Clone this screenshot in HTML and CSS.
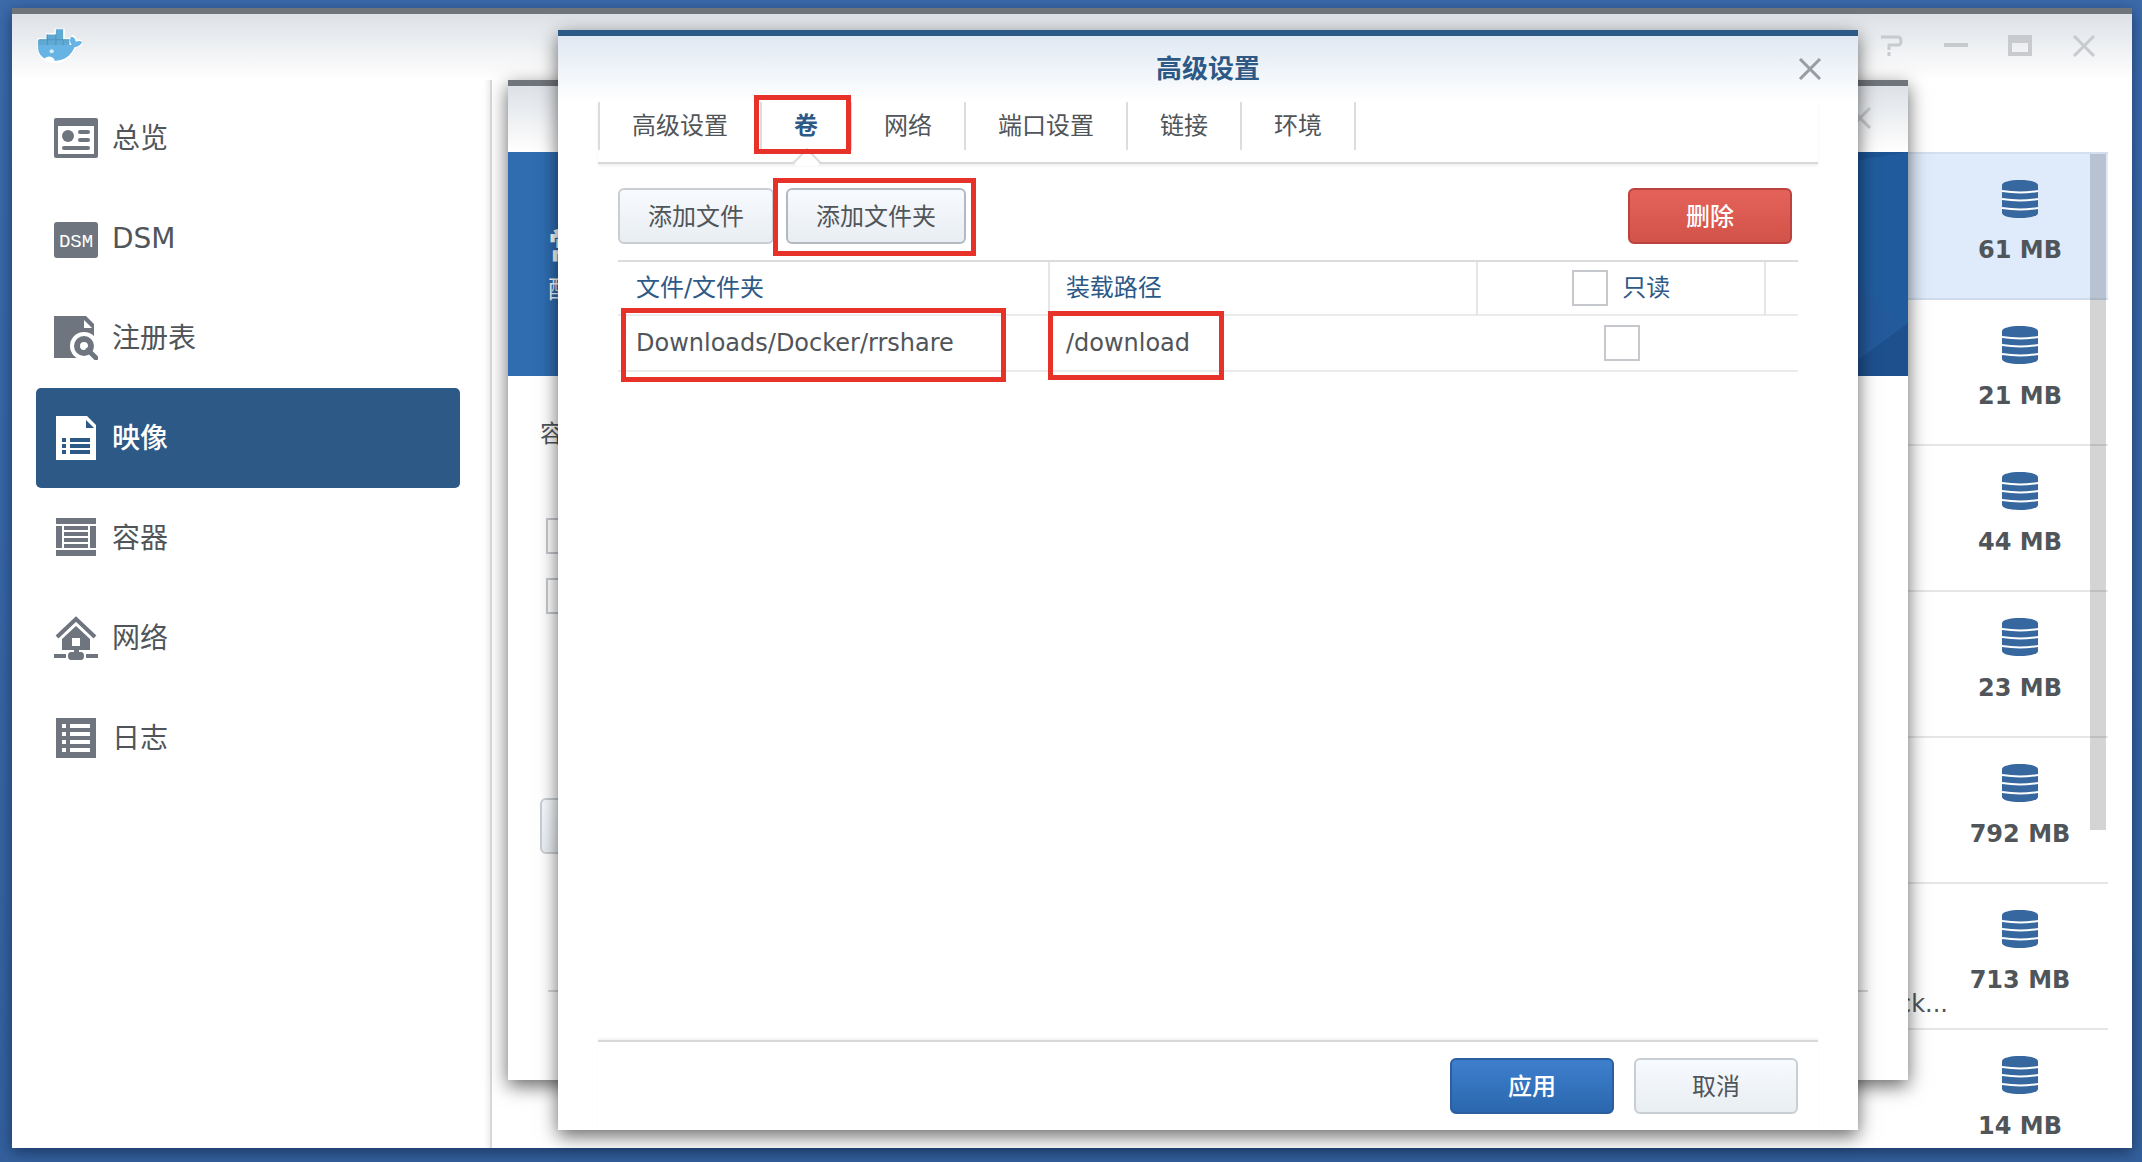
FILE: index.html
```html
<!DOCTYPE html>
<html lang="zh-CN">
<head>
    <meta charset="UTF-8">
    <meta name="viewport" content="width=device-width, initial-scale=1.0">
    <title>Docker</title>
    <link rel="stylesheet" href="styles.css">
</head>
<body>
    <svg width="0" height="0" class="defs">
        <symbol id="close" viewBox="0 0 24 22">
            <path d="M2 1L22 21M22 1L2 21" fill="none" stroke="currentColor" stroke-width="3"/>
        </symbol>
        <symbol id="disk" viewBox="0 0 36 38">
            <path d="M0 5C0 2 8 0 18 0s18 2 18 5v28c0 3-8 5-18 5S0 36 0 33z" fill="#36679f"/>
            <path d="M0 11q18 3 36 0M0 19q18 3 36 0M0 28q18 3 36 0" fill="none" stroke="#fff" stroke-width="2"/>
        </symbol>
    </svg>

    <div class="window main-window">
        <header class="titlebar">
            <svg class="logo" viewBox="0 0 44 34">
                <path d="M3 16V11h8V6h8V2h7v9h6v5h2c-1-3-1-6 1-8 2 1 3 3 3 5 2-1 4-1 6 0-1 3-4 4-7 4-4 10-10 15-19 15C9 32 2 27 3 16z" fill="#fff" stroke="#fff" stroke-width="3"/>
                <path d="M2 17V11h8V6h9V1h7v10h6v6z" fill="#5fa9d3"/>
                <path d="M2 16h32c-2-3-2-6 0-8 2 1 4 2 4 5 2-1 4-1 6 0-1 3-4 5-7 5-4 9-10 13-19 13C8 31 1 26 2 16z" fill="#67b3e4"/>
                <path d="M3 11h29M11 6v10M19 6v10M26 11v5" stroke="#4b97c2" fill="none"/>
                <path d="M8 29q5-4 9 0l1 2q-6 1-10-2z" fill="#fff"/>
                <circle cx="15" cy="22" r="2" fill="#d5edfa"/>
            </svg>
            <div class="controls">
                <button type="button" aria-label="帮助">
                    <svg width="24" height="22" viewBox="0 0 24 22"><path d="M1 2h17q3 0 3 4t-3 4H9v5M9 17v4" fill="none" stroke="currentColor" stroke-width="3"/></svg>
                </button>
                <button type="button" aria-label="最小化">
                    <svg width="24" height="22" viewBox="0 0 24 22"><path d="M0 10h24" stroke="currentColor" stroke-width="4"/></svg>
                </button>
                <button type="button" aria-label="最大化">
                    <svg width="24" height="22" viewBox="0 0 24 22"><path d="M2 1v18h20V1M0 2h24M2 6h20" fill="none" stroke="currentColor" stroke-width="4"/></svg>
                </button>
                <button type="button" aria-label="关闭">
                    <svg width="24" height="22"><use href="#close"/></svg>
                </button>
            </div>
        </header>
        <div class="main-body">
            <nav class="sidebar">
                <a href="#" class="nav-item">
                    <svg viewBox="0 0 44 44">
                        <rect y="2" width="44" height="40" rx="2"/>
                        <path d="M4 10h36v28H4z" fill="#fff"/>
                        <circle cx="14" cy="20" r="6"/>
                        <path d="M26 16h8M26 24h8M10 32h24" stroke="currentColor" stroke-width="4" stroke-linecap="round"/>
                    </svg>
                    <span>总览</span>
                </a>
                <a href="#" class="nav-item">
                    <svg viewBox="0 0 44 44">
                        <rect y="6" width="44" height="36" rx="3"/>
                        <text x="22" y="31" class="dsm">DSM</text>
                    </svg>
                    <span>DSM</span>
                </a>
                <a href="#" class="nav-item">
                    <svg viewBox="0 0 44 44">
                        <path d="M0 0h32l8 8v34H0z"/>
                        <path d="M30 4v8h8z" fill="#fff"/>
                        <circle cx="30" cy="30" r="14" fill="#fff"/>
                        <path d="M34 34l8 8" stroke="#fff" stroke-width="9"/>
                        <circle cx="30" cy="30" r="7" fill="#fff" stroke="currentColor" stroke-width="6"/>
                        <path d="M34 34l8 8" stroke="currentColor" stroke-width="5" stroke-linecap="round"/>
                    </svg>
                    <span>注册表</span>
                </a>
                <a href="#" class="nav-item active">
                    <svg viewBox="0 0 44 44">
                        <path d="M2 0h31l9 9v35H2z"/>
                        <path d="M32 4v8h8z" fill="#2d5986"/>
                        <path d="M8 24h4M16 24h20M8 30h4M16 30h20M8 36h4M16 36h20" stroke="#2d5986" stroke-width="4"/>
                    </svg>
                    <span>映像</span>
                </a>
                <a href="#" class="nav-item">
                    <svg viewBox="0 0 44 44">
                        <path d="M2 2h40v6H2zM2 10h6v22H2zM36 10h6v22h-6zM2 34h40v6H2zM10 10h24v4H10zM10 16h24v4H10zM10 22h24v4H10zM10 28h24v4H10z"/>
                    </svg>
                    <span>容器</span>
                </a>
                <a href="#" class="nav-item">
                    <svg viewBox="0 0 44 44">
                        <path d="M3 21L22 3l19 18" fill="none" stroke="currentColor" stroke-width="4"/>
                        <path d="M22 10l14 13v11H25v2h2q3 0 3 4t-3 4H17q-3 0-3-4t3-4h3v-2H8V23z"/>
                        <path d="M18 22h8v8h-8z" fill="#fff"/>
                        <path d="M0 38h12v4H0zM32 38h12v4H32z"/>
                    </svg>
                    <span>网络</span>
                </a>
                <a href="#" class="nav-item">
                    <svg viewBox="0 0 44 44">
                        <path d="M2 2h40v40H2z"/>
                        <path d="M8 10h4M16 10h20M8 18h4M16 18h20M8 26h4M16 26h20M8 34h4M16 34h20" stroke="#fff" stroke-width="4"/>
                    </svg>
                    <span>日志</span>
                </a>
            </nav>
            <div class="images">
                <div class="image-row selected">
                    <div class="size"><svg><use href="#disk"/></svg>61 MB</div>
                </div>
                <div class="image-row">
                    <div class="size"><svg><use href="#disk"/></svg>21 MB</div>
                </div>
                <div class="image-row">
                    <div class="size"><svg><use href="#disk"/></svg>44 MB</div>
                </div>
                <div class="image-row">
                    <div class="size"><svg><use href="#disk"/></svg>23 MB</div>
                </div>
                <div class="image-row">
                    <div class="size"><svg><use href="#disk"/></svg>792 MB</div>
                </div>
                <div class="image-row">
                    <span class="desc">ck...</span>
                    <div class="size"><svg><use href="#disk"/></svg>713 MB</div>
                </div>
                <div class="image-row">
                    <div class="size"><svg><use href="#disk"/></svg>14 MB</div>
                </div>
                <div class="scrollbar"></div>
            </div>
        </div>
    </div>

    <div class="window wizard">
        <header class="titlebar">
            <div class="controls">
                <button type="button" aria-label="关闭"><svg width="24" height="22"><use href="#close"/></svg></button>
            </div>
        </header>
        <div class="banner">
            <h2>常</h2>
            <p>配</p>
            <svg class="banner-art" viewBox="0 0 140 224">
                <path d="M0 0h140v224H0z" fill="#205c9d"/>
                <path d="M0 0h140L90 8z" fill="#1c5393"/>
                <path d="M90 133l47 40-47 35z" fill="#235a9c"/>
                <path d="M140 171v53H90v-16z" fill="#1e508e"/>
            </svg>
        </div>
        <div class="wizard-body">
            <p>容</p>
            <input type="checkbox" class="box" aria-label="资源限制">
            <input type="checkbox" class="box" aria-label="自动重启">
            <button type="button" class="btn" aria-label="高级设置"></button>
        </div>
        <footer class="wizard-footer"></footer>
    </div>

    <div class="window modal" role="dialog" aria-labelledby="modal-title">
        <header class="titlebar">
            <h1 id="modal-title">高级设置</h1>
            <div class="controls">
                <button type="button" aria-label="关闭"><svg width="24" height="22"><use href="#close"/></svg></button>
            </div>
        </header>
        <div class="modal-body">
            <div class="tabs">
                <button type="button" class="tab">高级设置</button>
                <button type="button" class="tab active">卷<span class="mark mark-tab"></span></button>
                <button type="button" class="tab">网络</button>
                <button type="button" class="tab">端口设置</button>
                <button type="button" class="tab">链接</button>
                <button type="button" class="tab">环境</button>
            </div>
            <div class="content">
                <div class="toolbar">
                    <button type="button" class="btn">添加文件</button>
                    <div class="marked">
                        <button type="button" class="btn focus">添加文件夹</button>
                        <span class="mark mark-btn"></span>
                    </div>
                    <button type="button" class="btn wide red">删除</button>
                </div>
                <table>
                    <thead>
                        <tr>
                            <th class="col-file">文件/文件夹</th>
                            <th class="col-path">装载路径</th>
                            <th class="col-ro">
                                <label><input type="checkbox" class="box">只读</label>
                            </th>
                            <th></th>
                        </tr>
                    </thead>
                    <tbody>
                        <tr>
                            <td>Downloads/Docker/rrshare<span class="mark mark-file"></span></td>
                            <td>/download<span class="mark mark-path"></span></td>
                            <td class="col-ro"><input type="checkbox" class="box" aria-label="只读"></td>
                            <td></td>
                        </tr>
                    </tbody>
                </table>
            </div>
            <footer class="modal-footer">
                <button type="button" class="btn wide blue">应用</button>
                <button type="button" class="btn wide">取消</button>
            </footer>
        </div>
    </div>
</body>
</html>
```
FILE: styles.css
```css
* {
    box-sizing: border-box;
}
body {
    margin: 0;
    height: 100vh;
    overflow: hidden;
    position: relative;
    font-family: "DejaVu Sans", "Noto Sans CJK SC", sans-serif;
    font-size: 24px;
    line-height: 32px;
    color: #505559;
    background: linear-gradient(#3c6bab, #3867a6 40%, #34619d);
}
h1, h2, p {
    margin: 0;
}
button {
    font: inherit;
    color: inherit;
    padding: 0;
    border: none;
    background: none;
    cursor: pointer;
}
.defs {
    position: absolute;
}

/* windows */
.window {
    position: absolute;
    display: flex;
    flex-direction: column;
    background: #fff;
    border-top: 6px solid #70757b;
    box-shadow: 0 6px 18px rgba(0, 0, 0, 0.6);
}
.main-window {
    top: 8px;
    right: 10px;
    bottom: 14px;
    left: 12px;
    box-shadow: 0 4px 14px rgba(10, 25, 60, 0.6);
}
.wizard {
    top: 80px;
    right: 234px;
    bottom: 82px;
    left: 508px;
}
.modal {
    top: 30px;
    right: 284px;
    bottom: 32px;
    left: 558px;
    border-top-color: #2d5986;
}
.titlebar {
    display: flex;
    align-items: center;
    flex: none;
    height: 66px;
    padding: 0 36px 2px 24px;
    background: linear-gradient(#dde1e6, #fff);
}
.modal .titlebar {
    position: relative;
    justify-content: center;
    padding: 0 36px;
    background: linear-gradient(#e0e8f3, #fff);
}
.titlebar h1 {
    font-size: 26px;
    line-height: 32px;
    color: #2d5986;
}
.logo {
    width: 46px;
    height: 36px;
}
.controls {
    display: flex;
    gap: 40px;
    margin-left: auto;
    color: #c8cace;
}
.controls svg {
    display: block;
}
.modal .controls {
    position: absolute;
    right: 36px;
    color: #989da3;
}

/* main window */
.main-body {
    display: flex;
    flex: 1;
    min-height: 0;
}
.sidebar {
    width: 480px;
    padding: 8px 30px 0 24px;
    border-right: 2px solid #d8d8d8;
    background: linear-gradient(to left, #f0f0f0, #fff 6px);
}
.nav-item {
    display: flex;
    align-items: center;
    gap: 14px;
    height: 100px;
    padding: 0 18px;
    border-radius: 5px;
    font-size: 28px;
    color: #505559;
    text-decoration: none;
}
.nav-item span {
    padding-top: 2px;
}
.nav-item svg {
    width: 44px;
    height: 44px;
    color: #6e757e;
    fill: currentColor;
}
.nav-item.active {
    background: #2d5986;
    color: #fff;
    font-weight: 500;
}
.nav-item.active svg {
    color: #fff;
}
.dsm {
    font: 19px "Liberation Mono", monospace;
    text-anchor: middle;
    fill: #fff;
}
.images {
    flex: 1;
    position: relative;
    margin: 72px 24px 0 40px;
    border-top: 2px solid #d3dfee;
    overflow: hidden;
}
.image-row {
    display: flex;
    justify-content: flex-end;
    height: 146px;
    border-bottom: 2px solid #e6e6e6;
}
.image-row.selected {
    background: #dfeafa;
    border-bottom-color: #cfdcec;
}
.size {
    display: flex;
    flex-direction: column;
    align-items: center;
    gap: 14px;
    width: 176px;
    padding-top: 26px;
    line-height: 36px;
    font-weight: bold;
}
.size svg {
    width: 36px;
    height: 38px;
}
.desc {
    align-self: flex-end;
    padding-bottom: 8px;
    margin-right: -16px;
}
.scrollbar {
    position: absolute;
    top: 0;
    right: 2px;
    width: 16px;
    height: 676px;
    background: rgba(0, 0, 0, 0.17);
}

/* wizard behind the modal */
.banner {
    position: relative;
    flex: none;
    height: 224px;
    padding: 74px 40px;
    background: #2f6cb0;
    color: #fff;
}
.banner h2 {
    font-size: 36px;
    line-height: 44px;
}
.banner p {
    line-height: 40px;
}
.banner-art {
    position: absolute;
    top: 0;
    right: 0;
    height: 100%;
}
.wizard-body {
    display: flex;
    flex-direction: column;
    align-items: flex-start;
    flex: 1;
    padding: 42px 32px;
}
.wizard-body .box {
    margin: 0 6px 24px;
}
.wizard-body p {
    margin-bottom: 68px;
}
.wizard-body .btn {
    width: 160px;
    margin-top: 160px;
}
.wizard-footer {
    height: 90px;
    margin: 0 40px;
    border-top: 2px solid #d8d8d8;
}

/* modal */
.modal-body {
    display: flex;
    flex-direction: column;
    flex: 1;
    padding: 0 40px;
}
.tabs {
    display: flex;
    height: 62px;
    padding-bottom: 12px;
    border-bottom: 2px solid #d8d8d8;
    box-shadow: 0 2px 2px #f0f0f0;
}
.tab {
    position: relative;
    padding: 0 32px;
    border-left: 2px solid #dcdcdc;
}
.tab:last-child {
    border-right: 2px solid #dcdcdc;
}
.tab.active {
    color: #2d5986;
    font-weight: bold;
}
.tab.active::after {
    content: "";
    position: absolute;
    left: 35px;
    bottom: -22px;
    width: 18px;
    height: 18px;
    transform: rotate(45deg);
    background: linear-gradient(135deg, #fff 60%, transparent 60%);
    border-top: 2px solid #dcdcdc;
    border-left: 2px solid #dcdcdc;
}
.content {
    flex: 1;
    padding: 24px 20px 0;
}
.toolbar {
    display: flex;
    gap: 12px;
    margin: 0 6px 16px 0;
}
.marked {
    position: relative;
}
.btn {
    height: 56px;
    padding: 2px 28px 0;
    border: 2px solid #c9ced4;
    border-radius: 6px;
    background: linear-gradient(#f7fafe, #e9eef3);
}
.btn.focus {
    border-color: #b2b9c0;
}
.btn.wide {
    width: 164px;
}
.btn.red {
    margin-left: auto;
    border-color: #bb423e;
    background: linear-gradient(#e4625a, #d25349);
    color: #fff;
    font-weight: 500;
}
.btn.blue {
    border-color: #2b5f9f;
    background: linear-gradient(#3e7fcd, #2a67ae);
    color: #fff;
    font-weight: 500;
}
table {
    width: 100%;
    table-layout: fixed;
    border-spacing: 0;
    border-top: 2px solid #dcdcdc;
}
th, td {
    position: relative;
    padding: 0 16px;
    border-bottom: 2px solid #ebebeb;
    text-align: left;
}
th:first-child, td:first-child {
    padding-left: 18px;
}
th {
    height: 54px;
    border-right: 2px solid #e4e7ea;
    color: #2d5986;
    font-weight: normal;
}
th:last-child {
    border-right: none;
}
td {
    height: 56px;
}
.col-file {
    width: 36.6%;
}
.col-path {
    width: 36.3%;
}
.col-ro {
    width: 24.4%;
    text-align: center;
}
.col-ro label {
    display: flex;
    align-items: center;
    justify-content: center;
    gap: 14px;
}
.box {
    display: block;
    appearance: none;
    width: 36px;
    height: 36px;
    margin: 0;
    border: 2px solid #c5c8cd;
    background: #fff;
}
td .box {
    margin: 0 auto;
}
.modal-footer {
    display: flex;
    justify-content: flex-end;
    gap: 20px;
    padding: 16px 20px;
    border-top: 2px solid #d8d8d8;
    box-shadow: 0 -2px 2px #f4f4f4;
}

/* red callout frames */
.mark {
    position: absolute;
    z-index: 1;
    border: 5px solid #e73229;
    pointer-events: none;
}
.mark-tab {
    inset: -7px -1px -4px -8px;
}
.mark-btn {
    inset: -10px -10px -12px -13px;
}
.mark-file {
    inset: -8px 44px -12px 3px;
}
.mark-path {
    inset: -5px 254px -10px -2px;
}
```
